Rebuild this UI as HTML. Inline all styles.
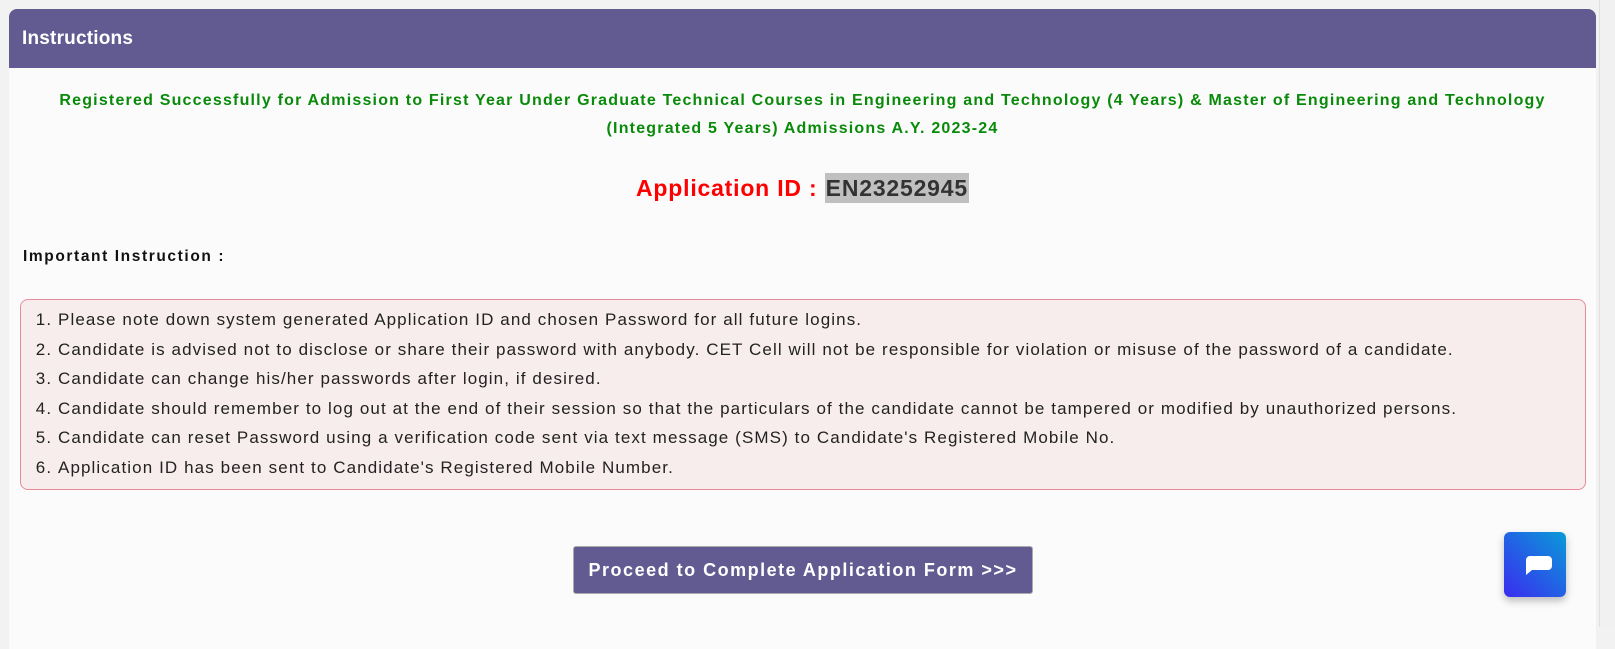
<!DOCTYPE html>
<html><head><meta charset="utf-8"><style>
body{margin:0;width:1615px;height:627px;background:#f2f2f2;font-family:"Liberation Sans",sans-serif;overflow:hidden;position:relative}
.sb{position:absolute;left:1599px;top:0;width:16px;height:627px;background:#f1f1f1;border-left:1px solid #e0e0e0}
.card{position:absolute;left:9px;top:9px;width:1587px;height:640px;background:#fbfbfb;border-radius:8px 8px 0 0}
.hd{height:59px;background:#625b91;border-radius:8px 8px 0 0;color:#fff;font-weight:bold;font-size:19px;line-height:60px;padding-left:13px;letter-spacing:.2px}
.g{position:absolute;left:0;width:1587px;top:78px;text-align:center;color:#0a8a0a;font-weight:bold;font-size:16px;line-height:28px;letter-spacing:1.2px}
.aid{position:absolute;left:0;width:1587px;top:166px;text-align:center;font-weight:bold;font-size:23px;color:#f00;letter-spacing:.8px}
.aid span{background:#c0c0c0;color:#333;padding:2px 1px}
.imp{position:absolute;left:14px;top:239px;font-weight:bold;font-size:15.5px;color:#111;letter-spacing:1.6px}
.box{position:absolute;left:11px;top:290px;width:1566px;height:191px;background:#f8eded;border:1px solid #e88a9a;border-radius:8px;box-sizing:border-box}
ol{margin:0;padding:5px 0 0 37px;font-size:17px;line-height:29.5px;color:#222;letter-spacing:1.1px}
li{padding-left:0}
.btn{position:absolute;left:564px;top:537px;width:460px;height:48px;background:#625b91;border:1px solid #aaa;border-radius:3px;box-sizing:border-box;color:#fff;font-weight:bold;font-size:18px;line-height:46px;text-align:center;letter-spacing:1.5px}
.chat{position:absolute;left:1504px;top:532px;width:62px;height:65px;border-radius:6px;background:linear-gradient(225deg,#0a9ad8,#3a2cf0);box-shadow:0 4px 8px rgba(0,0,0,.25)}
</style></head><body>
<div class="sb"></div>
<div class="card">
<div class="hd">Instructions</div>
<div class="g">Registered Successfully for Admission to First Year Under Graduate Technical Courses in Engineering and Technology (4 Years) &amp; Master of Engineering and Technology<br>(Integrated 5 Years) Admissions A.Y. 2023-24</div>
<div class="aid">Application ID : <span>EN23252945</span></div>
<div class="imp">Important Instruction :</div>
<div class="box"><ol>
<li>Please note down system generated Application ID and chosen Password for all future logins.</li>
<li>Candidate is advised not to disclose or share their password with anybody. CET Cell will not be responsible for violation or misuse of the password of a candidate.</li>
<li>Candidate can change his/her passwords after login, if desired.</li>
<li>Candidate should remember to log out at the end of their session so that the particulars of the candidate cannot be tampered or modified by unauthorized persons.</li>
<li>Candidate can reset Password using a verification code sent via text message (SMS) to Candidate's Registered Mobile No.</li>
<li>Application ID has been sent to Candidate's Registered Mobile Number.</li>
</ol></div>
<div class="btn">Proceed to Complete Application Form &gt;&gt;&gt;</div>
</div>
<div class="chat"><svg width="62" height="65" viewBox="0 0 62 65"><path d="M22 28a4 4 0 0 1 4-4h18a4 4 0 0 1 4 4v6a4 4 0 0 1-4 4H28l-6 5z" fill="#fff"/></svg></div>
</body></html>
